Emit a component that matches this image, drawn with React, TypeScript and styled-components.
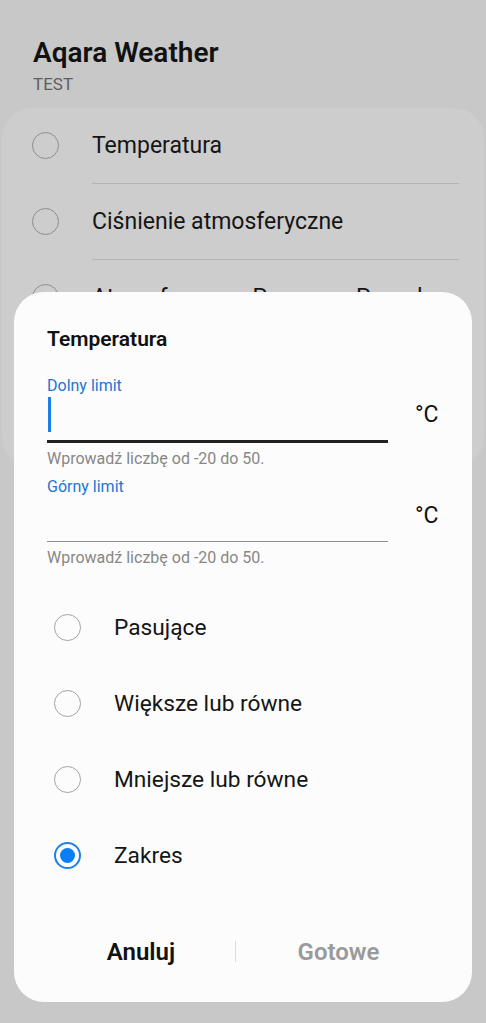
import React from 'react';
import styled, { createGlobalStyle } from 'styled-components';

const GlobalStyle = createGlobalStyle`
	html, body {
		margin: 0;
		padding: 0;
		background: #c8c8c8;
	}
	body {
		font-family: Roboto, "Noto Sans", "Liberation Sans", sans-serif;
		-webkit-font-smoothing: antialiased;
	}
`;

const Screen = styled.div`
	position: relative;
	width: 486px;
	height: 1023px;
	overflow: hidden;
	background: #c8c8c8;
`;

const Header = styled.header`
	padding: 37px 33px 14px;
	display: flex;
	flex-direction: column;
	gap: 5px;
`;

const AppTitle = styled.h1`
	margin: 0;
	font-size: 28px;
	line-height: 32px;
	font-weight: 600;
	color: #111;
`;

const AppSub = styled.div`
	font-size: 17px;
	line-height: 20px;
	color: #5e5e5e;
`;

const BackCard = styled.section`
	margin: 0 2px;
	height: 359px;
	border-radius: 30px;
	background: #cdcdcd;
`;

const BackRow = styled.div`
	height: 75px;
	display: flex;
	align-items: center;
	padding: 0 25px 0 30px;
	gap: 33px;
`;

const BackLabel = styled.span`
	font-size: 23px;
	color: #151515;
	white-space: nowrap;
`;

const BackDivider = styled.div`
	height: 1px;
	margin: 0 25px 0 90px;
	background: #b4b4b4;
`;

const Ring = styled.span<{ $on?: boolean; $dim?: boolean }>`
	flex: 0 0 auto;
	box-sizing: border-box;
	width: 27px;
	height: 27px;
	border-radius: 50%;
	border: ${(p) => (p.$on ? '2px solid #1f80e8' : `1.5px solid ${p.$dim ? '#8e8e8e' : '#a2a2a2'}`)};
	display: flex;
	align-items: center;
	justify-content: center;

	&::after {
		content: '';
		display: ${(p) => (p.$on ? 'block' : 'none')};
		width: 15px;
		height: 15px;
		border-radius: 50%;
		background: #0b7df5;
	}
`;

const Dialog = styled.div`
	position: absolute;
	left: 14px;
	right: 14px;
	top: 292px;
	box-sizing: border-box;
	padding: 35px 31px 22px 33px;
	background: #fcfcfc;
	border-radius: 30px;
	display: flex;
	flex-direction: column;
`;

const DialogTitle = styled.h2`
	margin: 0 0 25px;
	font-size: 21px;
	line-height: 24px;
	font-weight: 600;
	color: #111;
`;

const FieldLabel = styled.label`
	font-size: 16px;
	line-height: 20px;
	color: #2176d2;
`;

const FieldRow = styled.div`
	display: flex;
	align-items: flex-start;
`;

const Field = styled.div<{ $focused?: boolean }>`
	flex: 0 0 340px;
	height: 43px;
	border-bottom: ${(p) => (p.$focused ? '3px solid #222' : '1px solid #8f8f8f')};
	display: flex;
	align-items: flex-start;
	padding-left: 1px;
	padding-top: 1px;
`;

const Caret = styled.span`
	width: 3px;
	height: 35px;
	background: #1a80e8;
`;

const Unit = styled.span`
	margin: 6px 0 0 27px;
	font-size: 23px;
	line-height: 26px;
	color: #111;
`;

const Helper = styled.div<{ $gap: number }>`
	margin: 6px 0 ${(p) => p.$gap}px;
	font-size: 16px;
	line-height: 20px;
	color: #878787;
`;

const Options = styled.div`
	display: flex;
	flex-direction: column;
	margin-bottom: 31px;
`;

const Option = styled.div`
	height: 76px;
	display: flex;
	align-items: center;
	padding-left: 7px;
	gap: 33px;
`;

const OptionLabel = styled.span`
	font-size: 22.7px;
	color: #151515;
`;

const Buttons = styled.div`
	height: 56px;
	display: flex;
	align-items: center;
`;

const Button = styled.button<{ $muted?: boolean; $w?: number }>`
	${(p) => (p.$w ? `flex: 0 0 ${p.$w}px;` : 'flex: 1;')}
	height: 56px;
	border: 0;
	background: none;
	padding: 0;
	font-family: inherit;
	font-size: 24px;
	font-weight: 600;
	color: ${(p) => (p.$muted ? '#9a9a9a' : '#111')};
`;

const ButtonDivider = styled.span`
	width: 1px;
	height: 21px;
	margin-top: -2px;
	background: #dcdcdc;
`;

const rows = ['Temperatura', 'Ciśnienie atmosferyczne', 'Atmosferyczna Prognoza Pogody'];
const options = ['Pasujące', 'Większe lub równe', 'Mniejsze lub równe', 'Zakres'];

export default function App() {
	return (
		<Screen>
			<GlobalStyle />
			<Header>
				<AppTitle>Aqara Weather</AppTitle>
				<AppSub>TEST</AppSub>
			</Header>
			<BackCard>
				{rows.map((r, i) => (
					<React.Fragment key={r}>
						<BackRow>
							<Ring $dim />
							<BackLabel>{r}</BackLabel>
						</BackRow>
						{i < 2 && <BackDivider />}
					</React.Fragment>
				))}
			</BackCard>

			<Dialog>
				<DialogTitle>Temperatura</DialogTitle>

				<FieldLabel>Dolny limit</FieldLabel>
				<FieldRow>
					<Field $focused>
						<Caret />
					</Field>
					<Unit>°C</Unit>
				</FieldRow>
				<Helper $gap={8}>Wprowadź liczbę od -20 do 50.</Helper>

				<FieldLabel>Górny limit</FieldLabel>
				<FieldRow>
					<Field />
					<Unit>°C</Unit>
				</FieldRow>
				<Helper $gap={21}>Wprowadź liczbę od -20 do 50.</Helper>

				<Options>
					{options.map((o) => (
						<Option key={o}>
							<Ring $on={o === 'Zakres'} />
							<OptionLabel>{o}</OptionLabel>
						</Option>
					))}
				</Options>

				<Buttons>
					<Button $w={188}>Anuluj</Button>
					<ButtonDivider />
					<Button $muted>Gotowe</Button>
				</Buttons>
			</Dialog>
		</Screen>
	);
}
